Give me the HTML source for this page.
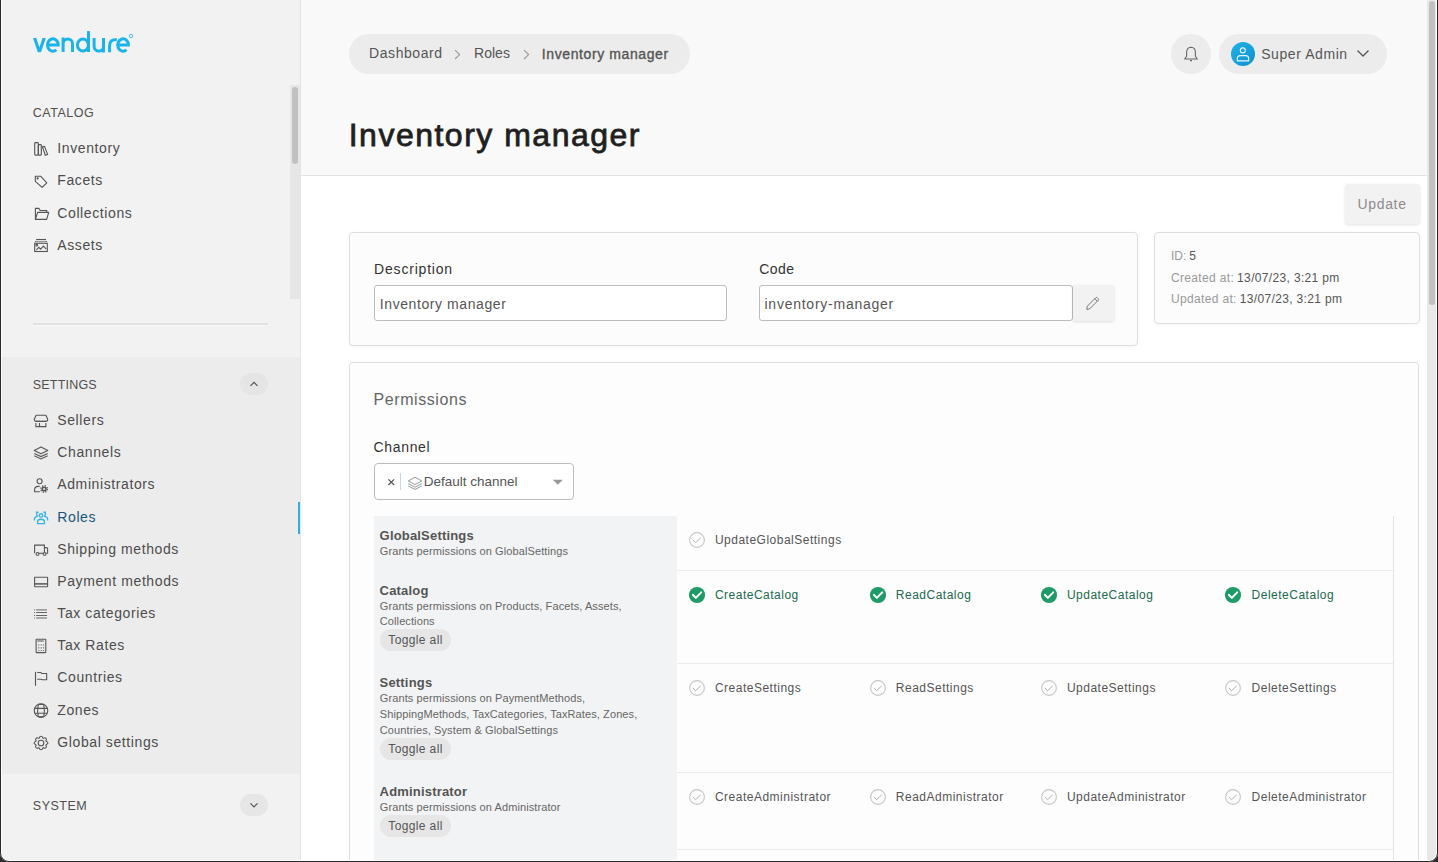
<!DOCTYPE html>
<html><head><meta charset="utf-8">
<style>
*{box-sizing:border-box;margin:0;padding:0}
html,body{width:1438px;height:862px;overflow:hidden;background:#fff;font-family:"Liberation Sans",sans-serif;position:relative}
.a{position:absolute}
.t{position:absolute;white-space:nowrap;line-height:20px;height:20px}
.nav{font-size:14px;letter-spacing:.6px;color:#4d4d4d;left:57.3px}
.hdr{font-size:12.5px;letter-spacing:.5px;color:#4f4f4f;left:32.8px}
.si{position:absolute;left:30px;width:22px;height:22px;fill:none;stroke:#555;stroke-width:1.1}
#frame{position:absolute;left:0;top:-20px;width:1438px;height:882px;border:1px solid #2a2a2a;border-radius:0 0 9px 9px;box-shadow:0 0 0 40px #2a2a2a,inset 0 0 0 1px #fefefe;z-index:100;pointer-events:none}
.gn{left:379.6px;font-size:13px;font-weight:700;letter-spacing:.18px;color:#555}
.gd{left:379.8px;font-size:11px;letter-spacing:.1px;color:#666}
.tg{left:380px;width:71px;height:22px;border-radius:11px;background:#e6e6e6}
.tgt{left:388.3px;font-size:12px;letter-spacing:.37px;color:#555}
.pt{font-size:12px;letter-spacing:.5px;color:#555}
.pt.on{color:#216a50}
</style></head>
<body>
<!-- SIDEBAR -->
<div class="a" style="left:0;top:0;width:300px;height:862px;background:#f2f2f2"></div>
<div class="a" style="left:300px;top:0;width:1px;height:862px;background:#e4e4e4"></div>
<div class="a" style="left:0;top:357px;width:300px;height:417px;background:#ececec"></div>

<!-- logo -->
<svg class="a" style="left:0;top:0" width="140" height="60" viewBox="0 0 140 60" fill="none" stroke="#1ab4ea" stroke-width="3">
  <path d="M33 38 H36.3 L39.4 47.6 L42.5 38 H45.8 L41 52.2 H37.8 Z" fill="#1ab4ea" stroke="none"/>
  <path d="M47.4 45.1 H58.2 A5.35 6.2 0 1 0 56.3 49.8"/>
  <path d="M63.1 37.6 V52 M63.1 43.8 A4.7 4.9 0 0 1 72.5 43.8 V52"/>
  <ellipse cx="82.9" cy="45" rx="5.5" ry="6"/>
  <path d="M88.5 31.1 V52"/>
  <path d="M94.1 38.1 V46.2 A4.7 4.9 0 0 0 103.5 46.2 M103.5 38.1 V52.4"/>
  <path d="M109.6 52.3 V45.5 Q109.6 39.6 116.8 39.6"/>
  <path d="M117.6 45.1 H128.4 A5.35 6.2 0 1 0 126.5 49.8"/>
  <circle cx="131" cy="36" r="1.7" stroke-width=".8"/>
</svg>

<!-- sidebar scroll -->
<div class="a" style="left:290px;top:85px;width:10px;height:214px;background:#e6e6e6"></div>
<div class="a" style="left:292px;top:87px;width:6px;height:77px;border-radius:3px;background:#c1c1c1"></div>

<div class="t hdr" style="top:102.8px">CATALOG</div>
<svg class="si" style="top:138px" viewBox="0 0 22 22"><rect x="4.7" y="4.6" width="3.6" height="12.5" rx=".9"/><rect x="8.3" y="6.6" width="3" height="10.5" rx=".6"/><path d="M12.3 8.8 L14.5 8.4 L17.6 16.4 L15.3 17.3 Z"/></svg>
<div class="t nav" style="top:138px">Inventory</div>
<svg class="si" style="top:170px" viewBox="0 0 22 22"><path d="M5.3 6.2 H10.6 L16.8 12.8 L12.1 17.4 L5.3 11.3 Z" stroke-linejoin="round"/><circle cx="7.6" cy="8.4" r=".55" fill="#555"/></svg>
<div class="t nav" style="top:170px">Facets</div>
<svg class="si" style="top:202px" viewBox="0 0 22 22"><path d="M5.4 17.3 V6.4 H8.8 L10.2 8.5 H16.7 V10.3"/><path d="M7.6 10.4 H18.7 L16.7 17.4 H5.4 Z" stroke-linejoin="round"/></svg>
<div class="t nav" style="top:203px">Collections</div>
<svg class="si" style="top:234px" viewBox="0 0 22 22"><path d="M6.2 5.5 H16"/><rect x="5.4" y="6.9" width="11.2" height="1.3" fill="#999" stroke="none"/><circle cx="5.6" cy="7.5" r=".6" fill="#555" stroke="none"/><circle cx="16.4" cy="7.5" r=".6" fill="#555" stroke="none"/><rect x="4.7" y="9.3" width="12.6" height="8.2"/><circle cx="6.8" cy="11.2" r=".8"/><path d="M6.3 16 L8.8 13.3 L10.6 15.2 L13.4 12.1 L16.3 15.2"/></svg>
<div class="t nav" style="top:235px">Assets</div>

<div class="a" style="left:33px;top:323px;width:235px;height:2px;background:#e2e2e2"></div><div class="a" style="left:33px;top:325px;width:235px;height:1px;background:#f8f8f8"></div>

<div class="t hdr" style="top:375.4px;letter-spacing:.2px">SETTINGS</div>
<div class="a" style="left:240px;top:373px;width:28px;height:22px;border-radius:11px;background:#e5e5e5"></div>
<svg class="a" style="left:248px;top:378px" width="12" height="12" viewBox="0 0 12 12" fill="none" stroke="#555" stroke-width="1.2"><path d="M2.5 7.8 L6 4.3 L9.5 7.8"/></svg>

<svg class="si" style="top:409px" viewBox="0 0 22 22"><path d="M6.1 6.3 H15.9 L17.7 10.3 Q17.7 12.4 15.8 12.4 H6.1 Q4.3 12.4 4.3 10.3 Z" stroke-linejoin="round"/><path d="M5.9 14 V17.6 H15.9 V14 M9.5 14 V17.6"/><path d="M7 11.5 V12 M9.6 11.5 V12 M12.4 11.5 V12 M15 11.5 V12" stroke-width=".9"/></svg>
<div class="t nav" style="top:410px">Sellers</div>
<svg class="si" style="top:441px" viewBox="0 0 22 22"><path d="M4.2 9.5 L11 6 L17.8 9.5 L11 12.8 Z" stroke-linejoin="round"/><path d="M4.3 12.4 L11 15.6 L17.7 12.4 M4.3 14.8 L11 17.9 L17.7 14.8"/></svg>
<div class="t nav" style="top:442px">Channels</div>
<svg class="si" style="top:473px" viewBox="0 0 22 22"><circle cx="9.6" cy="8.3" r="2.5"/><path d="M9.7 13.4 H8.4 Q4.6 13.4 4.6 16.6 V18.8 H9.8"/><circle cx="14.1" cy="16" r="2.6" fill="#555" stroke="none"/><circle cx="14.1" cy="16" r="3.3" stroke-width="1.3" stroke-dasharray="1.3 1.3"/><circle cx="14.1" cy="16" r="1.05" fill="#ececec" stroke="none"/></svg>
<div class="t nav" style="top:474px">Administrators</div>
<svg class="si" style="top:506px;stroke:#38b5e6;stroke-width:1.35" viewBox="0 0 22 22"><circle cx="11" cy="9.4" r="1.7"/><path d="M7.6 17.6 V15.6 Q7.6 13.2 11 13.2 Q14.4 13.2 14.4 15.6 V17.6 Z"/><path d="M8.6 6.2 H6.6 Q6.4 8.9 7.4 10 L5.2 11.3 Q4.4 11.8 4.4 13 V14.6"/><path d="M13.4 6.2 H15.4 Q15.6 8.9 14.6 10 L16.8 11.3 Q17.6 11.8 17.6 13 V14.6"/></svg>
<div class="t nav" style="top:507px;color:#17577a">Roles</div>
<div class="a" style="left:298px;top:502px;width:2px;height:32px;background:#2db1e4"></div>
<svg class="si" style="top:538px" viewBox="0 0 22 22"><path d="M4.6 15.2 V7.1 H14.4 V14.8"/><path d="M14.6 9.6 H16.5 Q17.6 9.6 17.6 10.7 V15.3 H16.2"/><circle cx="7.5" cy="15.9" r="1.4"/><circle cx="14.6" cy="15.9" r="1.4"/><path d="M9 15.3 H13.1"/></svg>
<div class="t nav" style="top:539px">Shipping methods</div>
<svg class="si" style="top:570px" viewBox="0 0 22 22"><rect x="4.6" y="7.2" width="13" height="9.6" rx=".6"/><path d="M4.6 13.9 H17.6" stroke-width="1.5"/></svg>
<div class="t nav" style="top:571px">Payment methods</div>
<svg class="si" style="top:602px" viewBox="0 0 22 22"><path d="M4 7.9 H5 M6.1 7.9 H17 M4 10.5 H5 M6.1 10.5 H17 M4 13.5 H5 M6.1 13.5 H17 M4 16 H5 M6.1 16 H17" stroke-width="1" stroke="#666"/></svg>
<div class="t nav" style="top:603px">Tax categories</div>
<svg class="si" style="top:634px" viewBox="0 0 22 22"><rect x="6.1" y="5.3" width="9.7" height="13.3" rx=".5"/><path d="M7.3 7 H13.8" stroke-width="1"/><path d="M8.3 11 h1 M10.7 11 h1 M13.1 11 h1 M8.3 13.8 h1 M10.7 13.8 h1 M13.1 13.8 h1 M8.3 16.5 h1 M10.7 16.5 h1 M13.1 16.5 h1" stroke-width="1.2"/></svg>
<div class="t nav" style="top:635px">Tax Rates</div>
<svg class="si" style="top:666px" viewBox="0 0 22 22"><path d="M5.5 5.8 V19.8"/><path d="M7.2 6.5 H11 L11.7 7.5 H16.7 V13.7 H12.3 L11 13.2 H7.2" stroke-linejoin="round"/></svg>
<div class="t nav" style="top:667px">Countries</div>
<svg class="si" style="top:699px" viewBox="0 0 22 22"><circle cx="11" cy="11.6" r="6.8"/><path d="M8.3 5.4 Q7 11.6 8.3 17.8 M13.7 5.4 Q15 11.6 13.7 17.8 M4.4 9.4 H17.6 M4.4 14.2 H17.6 M8.6 5.4 H13.4 M8.6 17.9 H13.4"/></svg>
<div class="t nav" style="top:700px">Zones</div>
<svg class="si" style="top:731px" viewBox="0 0 22 22"><path d="M11 5.2 Q12.4 5.2 12.7 6.9 L13.6 7.3 Q15 6.3 16 7.3 Q16.9 8.3 15.9 9.6 L16.3 10.5 Q17.9 10.8 17.9 12 Q17.9 13.2 16.3 13.5 L15.9 14.4 Q16.9 15.7 16 16.7 Q15 17.7 13.6 16.7 L12.7 17.1 Q12.4 18.8 11 18.8 Q9.6 18.8 9.3 17.1 L8.4 16.7 Q7 17.7 6 16.7 Q5.1 15.7 6.1 14.4 L5.7 13.5 Q4.1 13.2 4.1 12 Q4.1 10.8 5.7 10.5 L6.1 9.6 Q5.1 8.3 6 7.3 Q7 6.3 8.4 7.3 L9.3 6.9 Q9.6 5.2 11 5.2 Z" stroke-linejoin="round"/><circle cx="11" cy="12" r="2.8"/></svg>
<div class="t nav" style="top:732px">Global settings</div>

<div class="t hdr" style="top:796.4px">SYSTEM</div>
<div class="a" style="left:240px;top:794px;width:28px;height:22px;border-radius:11px;background:#e6e6e6"></div>
<svg class="a" style="left:248px;top:799px" width="12" height="12" viewBox="0 0 12 12" fill="none" stroke="#555" stroke-width="1.2"><path d="M2.5 4.3 L6 7.8 L9.5 4.3"/></svg>
<!-- MAIN HEADER -->
<div class="a" style="left:301px;top:0;width:1126px;height:175px;background:#f9f9f9"></div>
<div class="a" style="left:301px;top:175px;width:1126px;height:1px;background:#e2e2e2"></div>

<div class="a" style="left:349px;top:34px;width:341px;height:40px;border-radius:20px;background:#ececec"></div>
<div class="t" style="left:369.1px;top:43px;font-size:14px;letter-spacing:.55px;color:#555">Dashboard</div>
<svg class="a" style="left:450px;top:46px" width="16" height="16" viewBox="0 0 16 16" fill="none" stroke="#999" stroke-width="1.15"><path d="M5 4.2 L9.6 8.6 L5 13"/></svg>
<div class="t" style="left:474.1px;top:43px;font-size:14px;letter-spacing:0px;color:#555">Roles</div>
<svg class="a" style="left:519px;top:46px" width="16" height="16" viewBox="0 0 16 16" fill="none" stroke="#999" stroke-width="1.15"><path d="M5 4.2 L9.6 8.6 L5 13"/></svg>
<div class="t" style="left:541.8px;top:44px;font-size:14px;letter-spacing:.6px;color:#555;-webkit-text-stroke:.35px #555">Inventory manager</div>

<div class="a" style="left:1171px;top:34px;width:40px;height:40px;border-radius:20px;background:#ececec"></div>
<svg class="a" style="left:1181px;top:44px" width="20" height="20" viewBox="0 0 20 20" fill="none" stroke="#666" stroke-width="1.1"><path d="M10 3.2 Q14.3 3.4 14.4 8.5 V12.3 L16.3 15 H3.7 L5.6 12.3 V8.5 Q5.7 3.4 10 3.2 Z" stroke-linejoin="round"/><path d="M9 16.6 H11" stroke-width="1.3"/></svg>

<div class="a" style="left:1219px;top:34px;width:168px;height:40px;border-radius:20px;background:#ececec"></div>
<div class="a" style="left:1231px;top:42px;width:24px;height:24px;border-radius:12px;background:linear-gradient(135deg,#21b3ea,#0f8fce)"></div>
<svg class="a" style="left:1231px;top:42px" width="24" height="24" viewBox="0 0 24 24" fill="none" stroke="#e8f8ff" stroke-width="1.1"><circle cx="11.8" cy="8.4" r="2.5"/><path d="M6.3 18.9 V16.6 Q6.3 13.6 9.3 13.6 H14.7 Q17.7 13.6 17.7 16.6 V18.9 Z" stroke-linejoin="round"/></svg>
<div class="t" style="left:1261.2px;top:44px;font-size:14px;letter-spacing:.58px;color:#555">Super Admin</div>
<svg class="a" style="left:1355px;top:46px" width="16" height="16" viewBox="0 0 16 16" fill="none" stroke="#555" stroke-width="1.3"><path d="M2.5 4.5 L8 10 L13.5 4.5"/></svg>

<div class="t" style="left:348.7px;top:115px;height:40px;line-height:40px;font-size:32px;font-weight:400;letter-spacing:1.5px;color:#1f1f1f;-webkit-text-stroke:.8px #1f1f1f">Inventory manager</div>

<!-- Update button -->
<div class="a" style="left:1345px;top:184px;width:75px;height:40px;border-radius:4px;background:#f2f2f2;box-shadow:0 1px 3px rgba(0,0,0,.12)"></div>
<div class="t" style="left:1357.6px;top:194px;font-size:14px;letter-spacing:.64px;color:#8c8c8c">Update</div>

<!-- card 1 -->
<div class="a" style="left:349px;top:232px;width:789px;height:114px;border:1px solid #dedede;border-radius:4px;background:#fcfcfc;box-shadow:0 1px 4px rgba(0,0,0,.035)"></div>
<div class="t" style="left:374.1px;top:259px;font-size:14px;letter-spacing:.8px;color:#333">Description</div>
<div class="a" style="left:374px;top:285px;width:353px;height:36px;border:1px solid #bdbdbd;border-radius:3px;background:#fff"></div>
<div class="t" style="left:379.8px;top:294px;font-size:14px;letter-spacing:.58px;color:#555">Inventory manager</div>
<div class="t" style="left:759.2px;top:259px;font-size:14px;letter-spacing:.5px;color:#333">Code</div>
<div class="a" style="left:759px;top:285px;width:314px;height:36px;border:1px solid #bdbdbd;border-radius:3px;background:#fff"></div>
<div class="t" style="left:764.5px;top:294px;font-size:14px;letter-spacing:.75px;color:#555">inventory-manager</div>
<div class="a" style="left:1073px;top:285px;width:41px;height:36px;border-radius:0 3px 3px 0;background:#f2f2f2;box-shadow:0 1px 3px rgba(0,0,0,.12)"></div>
<svg class="a" style="left:1083px;top:293px" width="20" height="20" viewBox="0 0 20 20" fill="none" stroke="#777" stroke-width="1"><path d="M3.8 16.5 L4.3 13.2 L12.8 4.7 Q13.5 4 14.2 4.7 L15.3 5.8 Q16 6.5 15.3 7.2 L6.8 15.7 Z M11.8 5.7 L14.3 8.2" stroke-linejoin="round"/></svg>

<!-- card 2 -->
<div class="a" style="left:1154px;top:232px;width:266px;height:92px;border:1px solid #dedede;border-radius:4px;background:#fcfcfc;box-shadow:0 1px 4px rgba(0,0,0,.035)"></div>
<div class="t" style="left:1171px;top:245.5px;font-size:12px;color:#999">ID:<span style="color:#555;margin-left:3px">5</span></div>
<div class="t" style="left:1171px;top:267.5px;font-size:12px;letter-spacing:.34px;color:#999">Created at:<span style="color:#555;margin-left:3px">13/07/23, 3:21 pm</span></div>
<div class="t" style="left:1171px;top:289.3px;font-size:12px;letter-spacing:.34px;color:#999">Updated at:<span style="color:#555;margin-left:3px">13/07/23, 3:21 pm</span></div>

<!-- permissions card -->
<div class="a" style="left:349px;top:362px;width:1070px;height:560px;border:1px solid #dedede;border-radius:4px;background:#fdfdfd;box-shadow:0 1px 4px rgba(0,0,0,.035)"></div>
<div class="t" style="left:373.6px;top:390px;font-size:16px;letter-spacing:.57px;color:#666">Permissions</div>
<div class="t" style="left:373.6px;top:437px;font-size:14px;letter-spacing:.65px;color:#333">Channel</div>
<div class="a" style="left:374px;top:463px;width:200px;height:37px;border:1px solid #bdbdbd;border-radius:4px;background:#fff"></div>
<svg class="a" style="left:384px;top:475px" width="14" height="14" viewBox="0 0 14 14" fill="none" stroke="#555" stroke-width="1.3"><path d="M4.4 4.4 L10.2 10 M10.2 4.4 L4.4 10"/></svg>
<div class="a" style="left:400px;top:473px;width:1px;height:17px;background:#c8d6e4"></div>
<svg class="a" style="left:405px;top:474px" width="20" height="18" viewBox="0 0 20 18" fill="none" stroke="#999" stroke-width="1"><path d="M3.2 7 L10 3.2 L16.8 7 L10 10.6 Z" stroke-linejoin="round"/><path d="M3.2 9.6 L10 13.2 L16.8 9.6 M3.2 12 L10 15.4 L16.8 12"/></svg>
<div class="t" style="left:423.8px;top:472px;font-size:13.5px;letter-spacing:0px;color:#555">Default channel</div>
<svg class="a" style="left:550px;top:476px" width="16" height="12" viewBox="0 0 16 12" fill="#999"><path d="M2.8 3.7 H12.8 L7.8 8.7 Z"/></svg>
<div class="a" style="left:374px;top:516px;width:303px;height:346px;background:#f2f3f4"></div>
<div class="a" style="left:1393px;top:516px;width:1px;height:346px;background:#e3e3e3"></div>
<div class="a" style="left:677px;top:570px;width:716px;height:1px;background:#ececec"></div>
<div class="a" style="left:677px;top:663px;width:716px;height:1px;background:#ececec"></div>
<div class="a" style="left:677px;top:772px;width:716px;height:1px;background:#ececec"></div>
<div class="a" style="left:677px;top:849px;width:716px;height:1px;background:#ececec"></div>
<div class="t gn" style="top:525.5px">GlobalSettings</div>
<div class="t gd" style="top:540.5px">Grants permissions on GlobalSettings</div>
<svg class="a" style="left:688.0px;top:530.8px" width="18" height="18" viewBox="0 0 18 18"><circle cx="9" cy="9" r="7.4" fill="none" stroke="#c6c6c6" stroke-width="1.1"/><path d="M4.9 9 L7.6 11.6 L12.7 6.9" fill="none" stroke="#b5b5b5" stroke-width="1"/></svg>
<div class="t pt" style="left:714.9px;top:529.8px">UpdateGlobalSettings</div>
<div class="t gn" style="top:580.6px">Catalog</div>
<div class="t gd" style="top:595.8px">Grants permissions on Products, Facets, Assets,</div>
<div class="t gd" style="top:611.1px">Collections</div>
<div class="a tg" style="top:629.3px"></div>
<div class="t tgt" style="top:630.3px">Toggle all</div>
<svg class="a" style="left:688.0px;top:586.0px" width="18" height="18" viewBox="0 0 18 18"><circle cx="9" cy="9" r="8.1" fill="#1e9b68"/><path d="M4.9 8.9 L7.9 11.9 L13.2 6.4" fill="none" stroke="#fff" stroke-width="2" stroke-linecap="round" stroke-linejoin="round"/></svg>
<div class="t pt on" style="left:714.9px;top:585.0px">CreateCatalog</div>
<svg class="a" style="left:869.2px;top:586.0px" width="18" height="18" viewBox="0 0 18 18"><circle cx="9" cy="9" r="8.1" fill="#1e9b68"/><path d="M4.9 8.9 L7.9 11.9 L13.2 6.4" fill="none" stroke="#fff" stroke-width="2" stroke-linecap="round" stroke-linejoin="round"/></svg>
<div class="t pt on" style="left:895.8px;top:585.0px">ReadCatalog</div>
<svg class="a" style="left:1040.0px;top:586.0px" width="18" height="18" viewBox="0 0 18 18"><circle cx="9" cy="9" r="8.1" fill="#1e9b68"/><path d="M4.9 8.9 L7.9 11.9 L13.2 6.4" fill="none" stroke="#fff" stroke-width="2" stroke-linecap="round" stroke-linejoin="round"/></svg>
<div class="t pt on" style="left:1066.9px;top:585.0px">UpdateCatalog</div>
<svg class="a" style="left:1224.0px;top:586.0px" width="18" height="18" viewBox="0 0 18 18"><circle cx="9" cy="9" r="8.1" fill="#1e9b68"/><path d="M4.9 8.9 L7.9 11.9 L13.2 6.4" fill="none" stroke="#fff" stroke-width="2" stroke-linecap="round" stroke-linejoin="round"/></svg>
<div class="t pt on" style="left:1251.6px;top:585.0px">DeleteCatalog</div>
<div class="t gn" style="top:673.2px">Settings</div>
<div class="t gd" style="top:688.3px">Grants permissions on PaymentMethods,</div>
<div class="t gd" style="top:704.4px">ShippingMethods, TaxCategories, TaxRates, Zones,</div>
<div class="t gd" style="top:720.2px">Countries, System &amp; GlobalSettings</div>
<div class="a tg" style="top:737.9px"></div>
<div class="t tgt" style="top:738.9px">Toggle all</div>
<svg class="a" style="left:688.0px;top:678.8px" width="18" height="18" viewBox="0 0 18 18"><circle cx="9" cy="9" r="7.4" fill="none" stroke="#c6c6c6" stroke-width="1.1"/><path d="M4.9 9 L7.6 11.6 L12.7 6.9" fill="none" stroke="#b5b5b5" stroke-width="1"/></svg>
<div class="t pt" style="left:714.9px;top:677.8px">CreateSettings</div>
<svg class="a" style="left:869.2px;top:678.8px" width="18" height="18" viewBox="0 0 18 18"><circle cx="9" cy="9" r="7.4" fill="none" stroke="#c6c6c6" stroke-width="1.1"/><path d="M4.9 9 L7.6 11.6 L12.7 6.9" fill="none" stroke="#b5b5b5" stroke-width="1"/></svg>
<div class="t pt" style="left:895.8px;top:677.8px">ReadSettings</div>
<svg class="a" style="left:1040.0px;top:678.8px" width="18" height="18" viewBox="0 0 18 18"><circle cx="9" cy="9" r="7.4" fill="none" stroke="#c6c6c6" stroke-width="1.1"/><path d="M4.9 9 L7.6 11.6 L12.7 6.9" fill="none" stroke="#b5b5b5" stroke-width="1"/></svg>
<div class="t pt" style="left:1066.9px;top:677.8px">UpdateSettings</div>
<svg class="a" style="left:1224.0px;top:678.8px" width="18" height="18" viewBox="0 0 18 18"><circle cx="9" cy="9" r="7.4" fill="none" stroke="#c6c6c6" stroke-width="1.1"/><path d="M4.9 9 L7.6 11.6 L12.7 6.9" fill="none" stroke="#b5b5b5" stroke-width="1"/></svg>
<div class="t pt" style="left:1251.6px;top:677.8px">DeleteSettings</div>
<div class="t gn" style="top:782.4px">Administrator</div>
<div class="t gd" style="top:797.3px">Grants permissions on Administrator</div>
<div class="a tg" style="top:815.0px"></div>
<div class="t tgt" style="top:816.0px">Toggle all</div>
<svg class="a" style="left:688.0px;top:787.8px" width="18" height="18" viewBox="0 0 18 18"><circle cx="9" cy="9" r="7.4" fill="none" stroke="#c6c6c6" stroke-width="1.1"/><path d="M4.9 9 L7.6 11.6 L12.7 6.9" fill="none" stroke="#b5b5b5" stroke-width="1"/></svg>
<div class="t pt" style="left:714.9px;top:786.8px">CreateAdministrator</div>
<svg class="a" style="left:869.2px;top:787.8px" width="18" height="18" viewBox="0 0 18 18"><circle cx="9" cy="9" r="7.4" fill="none" stroke="#c6c6c6" stroke-width="1.1"/><path d="M4.9 9 L7.6 11.6 L12.7 6.9" fill="none" stroke="#b5b5b5" stroke-width="1"/></svg>
<div class="t pt" style="left:895.8px;top:786.8px">ReadAdministrator</div>
<svg class="a" style="left:1040.0px;top:787.8px" width="18" height="18" viewBox="0 0 18 18"><circle cx="9" cy="9" r="7.4" fill="none" stroke="#c6c6c6" stroke-width="1.1"/><path d="M4.9 9 L7.6 11.6 L12.7 6.9" fill="none" stroke="#b5b5b5" stroke-width="1"/></svg>
<div class="t pt" style="left:1066.9px;top:786.8px">UpdateAdministrator</div>
<svg class="a" style="left:1224.0px;top:787.8px" width="18" height="18" viewBox="0 0 18 18"><circle cx="9" cy="9" r="7.4" fill="none" stroke="#c6c6c6" stroke-width="1.1"/><path d="M4.9 9 L7.6 11.6 L12.7 6.9" fill="none" stroke="#b5b5b5" stroke-width="1"/></svg>
<div class="t pt" style="left:1251.6px;top:786.8px">DeleteAdministrator</div>
<!-- right scrollbar -->
<div class="a" style="left:1427px;top:0;width:9px;height:862px;background:#e8e8e8"></div>
<div class="a" style="left:1429px;top:1px;width:6px;height:304px;border-radius:3px;background:#c1c1c1"></div>
<div id="frame"></div>
</body></html>
